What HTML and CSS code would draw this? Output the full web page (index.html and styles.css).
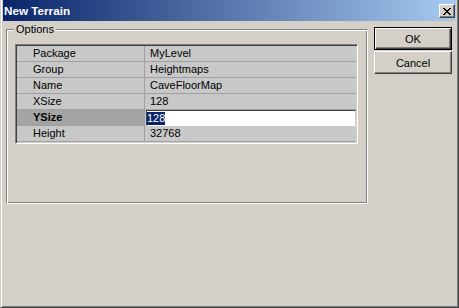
FILE: index.html
```html
<!DOCTYPE html>
<html lang="en">
<head>
<meta charset="UTF-8">
<meta name="viewport" content="width=device-width, initial-scale=1.0">
<title>New Terrain</title>
<link rel="stylesheet" href="styles.css">
</head>
<body>

<div class="window">
    <div class="titlebar">
        <span class="title">New Terrain</span>
        <button type="button" class="close-btn" aria-label="Close">
            <svg width="8" height="7" viewBox="0 0 8 7" shape-rendering="crispEdges">
                <path d="M0 0h2v1h-2zM6 0h2v1h-2zM1 1h2v1h-2zM5 1h2v1h-2zM2 2h4v1h-4zM3 3h2v1h-2zM2 4h4v1h-4zM1 5h2v1h-2zM5 5h2v1h-2zM0 6h2v1h-2zM6 6h2v1h-2z" fill="#000"/>
            </svg>
        </button>
    </div>

    <div class="client">
        <div class="group">
            <div class="legend">Options</div>
            <table class="props">
                <tr><td class="prop-name">Package</td><td class="prop-value">MyLevel</td></tr>
                <tr><td class="prop-name">Group</td><td class="prop-value">Heightmaps</td></tr>
                <tr><td class="prop-name">Name</td><td class="prop-value">CaveFloorMap</td></tr>
                <tr><td class="prop-name">XSize</td><td class="prop-value">128</td></tr>
                <tr class="active">
                    <td class="prop-name">YSize</td>
                    <td class="prop-value"><div class="edit"><span class="sel">128</span></div></td>
                </tr>
                <tr><td class="prop-name">Height</td><td class="prop-value">32768</td></tr>
            </table>
        </div>

        <div class="actions">
            <button type="button" class="btn default">OK</button>
            <button type="button" class="btn">Cancel</button>
        </div>
    </div>
</div>

</body>
</html>
```

FILE: styles.css
```css
html, body {
    margin: 0;
    padding: 0;
    background-color: #d4d0c8;
}
body {
    font-family: "Liberation Sans", Arial, sans-serif;
    font-size: 11px;
    color: #000;
}
.window {
    box-sizing: border-box;
    width: 459px;
    height: 308px;
    padding: 0 2px 1px 2px;
    background-color: #d4d0c8;
    border-left: 1px solid #d4d0c8;
    border-right: 1px solid #404040;
    border-bottom: 1px solid #404040;
    box-shadow: inset 1px 0 0 #fff, inset -1px -1px 0 #808080;
}
.titlebar {
    display: flex;
    align-items: flex-start;
    justify-content: space-between;
    height: 21px;
    background: linear-gradient(to right, #0a246a, #a6caf0);
}
.title {
    padding-left: 1px;
    line-height: 21px;
    font-size: 11.7px;
    font-weight: bold;
    color: #fff;
}
.close-btn {
    box-sizing: border-box;
    width: 16px;
    height: 14px;
    margin: 4px 1px 0 0;
    padding: 0;
    display: flex;
    align-items: center;
    justify-content: center;
    background-color: #d4d0c8;
    border: 1px solid;
    border-color: #fff #404040 #404040 #fff;
    box-shadow: inset -1px -1px 0 #808080;
}
.client {
    display: flex;
    align-items: flex-start;
    gap: 6px;
    padding-left: 3px;
}
.group {
    box-sizing: border-box;
    width: 362px;
    height: 175px;
    margin-top: 8px;
    border: 1px solid;
    border-color: #808080 #fff #fff #808080;
    box-shadow: inset 1px 1px 0 #fff, inset -1px -1px 0 #808080;
}
.legend {
    width: fit-content;
    margin: -7px 0 0 7px;
    padding: 0 2px;
    line-height: 13px;
    background-color: #d4d0c8;
}
.props {
    width: 343px;
    margin: 8px 0 0 8px;
    border-spacing: 0;
    border: 1px solid;
    border-color: #808080 #fff #fff #808080;
    box-shadow: inset 1px 1px 0 #404040, inset -1px -1px 0 #d4d0c8;
    padding: 1px;
    background-color: #c8c8c8;
}
.props td {
    height: 15px;
    padding: 0;
    line-height: 15px;
    border-bottom: 1px solid #a0a0a0;
    white-space: nowrap;
}
.prop-name {
    width: 111px;
    padding-left: 16px !important;
    border-right: 1px solid #a0a0a0;
}
.prop-value {
    padding-left: 5px !important;
}
.active .prop-name {
    background-color: #a4a4a4;
    font-weight: bold;
}
.active .prop-value {
    padding-left: 1px !important;
    border-bottom: none;
}
.edit {
    box-sizing: border-box;
    height: 16px;
    background-color: #fff;
    border: 1px solid;
    border-color: #404040 #d4d0c8 #fff #404040;
    line-height: 13px;
}
.sel {
    display: inline-block;
    margin-top: 1px;
    background-color: #0a246a;
    color: #fff;
}
.actions {
    display: flex;
    flex-direction: column;
    gap: 1px;
    margin-top: 6px;
}
.btn {
    box-sizing: border-box;
    width: 78px;
    height: 23px;
    padding: 0;
    font-family: "Liberation Sans", Arial, sans-serif;
    font-size: 11px;
    color: #000;
    background-color: #d4d0c8;
    border: 1px solid;
    border-color: #fff #404040 #404040 #fff;
    box-shadow: inset -1px -1px 0 #808080;
}
.btn.default {
    border-color: #000;
    box-shadow: inset 1px 1px 0 #fff, inset -1px -1px 0 #404040, inset -2px -2px 0 #808080;
}
```
